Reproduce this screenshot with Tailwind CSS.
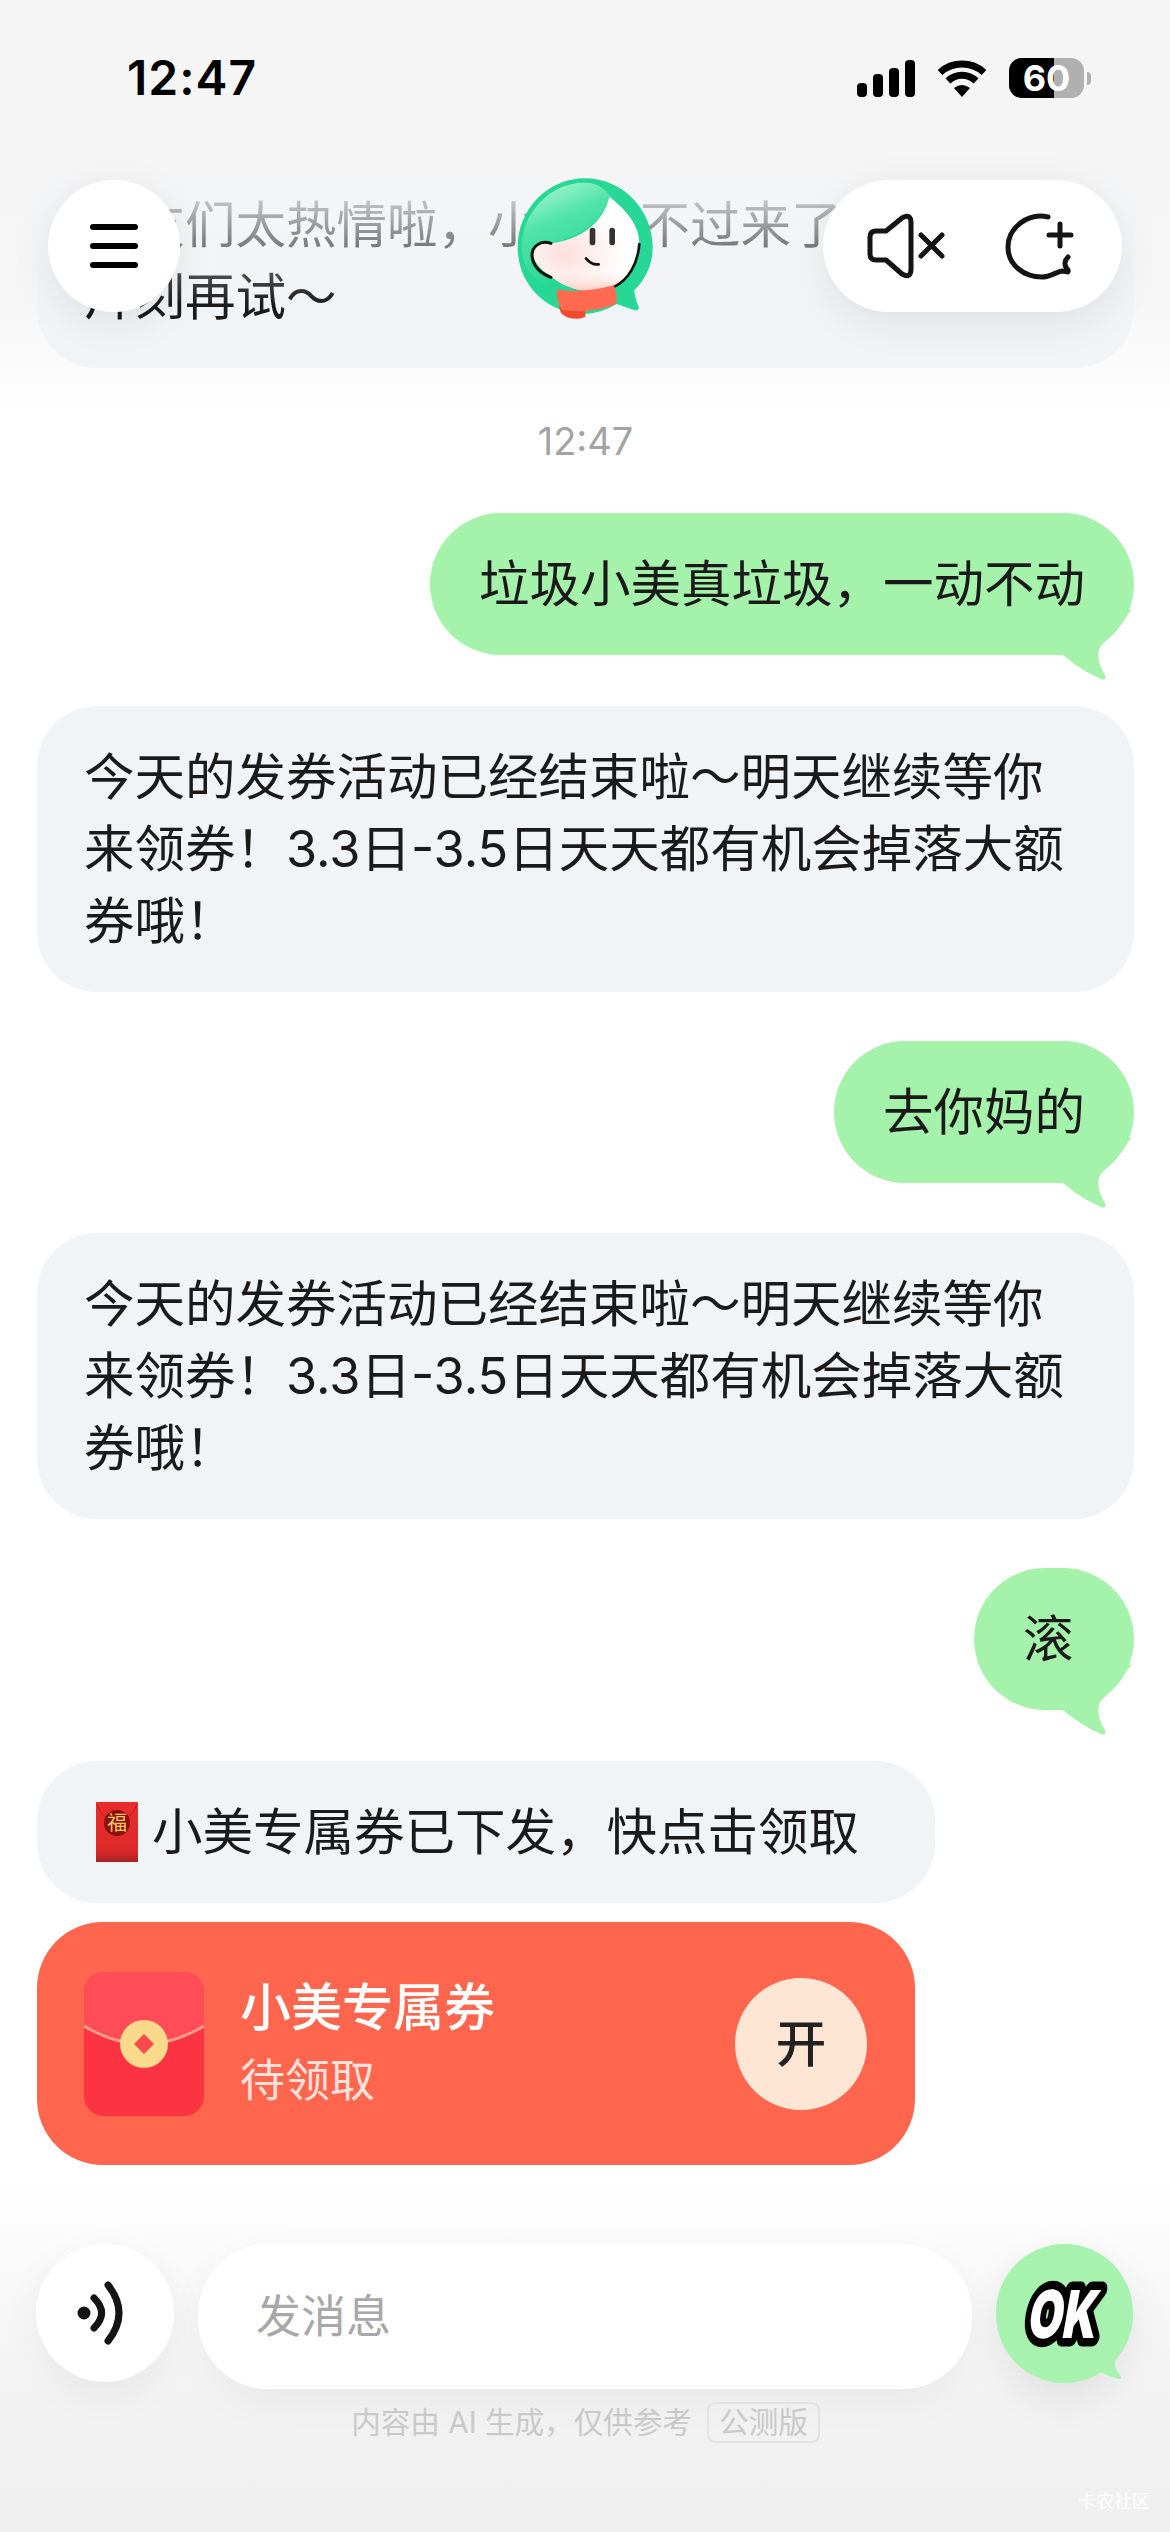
<!DOCTYPE html>
<html lang="zh">
<head>
<meta charset="utf-8">
<script src="https://cdn.jsdelivr.net/npm/@tailwindcss/browser@4"></script>
</head>
<body class="m-0">
<div class="relative w-[1170px] h-[2532px] overflow-hidden font-['Inter','Noto_Sans_CJK_SC','Noto_Sans',sans-serif] text-[50.5px] leading-[72px] text-[#1a1a1a] bg-[linear-gradient(180deg,#f3f4f5_0px,#f6f6f7_300px,#ffffff_420px,#ffffff_2170px,#f2f2f2_2400px,#efefef_2532px)]">

  <!-- chat flow -->
  <main class="flex flex-col items-start pl-[37px] pr-[36px] pt-[154px]">
    <div class="w-[1097px] rounded-[60px] bg-[#f1f4f6] px-[47px] pt-[35px] pb-[35px] whitespace-nowrap overflow-hidden">朋友们太热情啦，小美忙不过来了，<br>片刻再试～</div>

    <div class="w-full h-[145px] flex items-center justify-center text-[38px] text-[#a3a3a3]">12:47</div>

    <div class="relative self-end rounded-[72px] bg-[#a5f3ab] px-[49px] py-[35px] whitespace-nowrap">垃圾小美真垃圾，一动不动
      <svg class="absolute right-0 bottom-[-26px]" width="80" height="80" viewBox="0 0 80 80"><path fill="#a5f3ab" d="M9 54Q28 70 47 78Q53 80 51 74Q41 58 46 46Q62 30 78 8L40 20Z"/></svg>
    </div>

    <div class="w-[1097px] mt-[51px] rounded-[60px] bg-[#f1f4f6] px-[47px] py-[35px] whitespace-nowrap">今天的发券活动已经结束啦～明天继续等你<br>来领券！3.3日-3.5日天天都有机会掉落大额<br>券哦！</div>

    <div class="relative self-end mt-[49px] rounded-[72px] bg-[#a5f3ab] px-[49px] py-[35px] whitespace-nowrap">去你妈的
      <svg class="absolute right-0 bottom-[-26px]" width="80" height="80" viewBox="0 0 80 80"><path fill="#a5f3ab" d="M9 54Q28 70 47 78Q53 80 51 74Q41 58 46 46Q62 30 78 8L40 20Z"/></svg>
    </div>

    <div class="w-[1097px] mt-[50px] rounded-[60px] bg-[#f1f4f6] px-[47px] py-[35px] whitespace-nowrap">今天的发券活动已经结束啦～明天继续等你<br>来领券！3.3日-3.5日天天都有机会掉落大额<br>券哦！</div>

    <div class="relative self-end w-[160px] mt-[49px] rounded-[72px] bg-[#a5f3ab] pl-[49px] py-[35px] whitespace-nowrap">滚
      <svg class="absolute right-0 bottom-[-26px]" width="80" height="80" viewBox="0 0 80 80"><path fill="#a5f3ab" d="M9 54Q28 70 47 78Q53 80 51 74Q41 58 46 46Q62 30 78 8L40 20Z"/></svg>
    </div>

    <div class="mt-[51px] flex items-center rounded-[60px] bg-[#f1f4f6] pl-[59px] pr-[76px] py-[35px] whitespace-nowrap">
      <svg class="mr-[14px] shrink-0" width="42" height="60" viewBox="0 0 42 60">
        <defs><linearGradient id="env" x1="0" y1="0" x2="0" y2="1"><stop offset="0" stop-color="#ea2c2c"/><stop offset="0.8" stop-color="#dc2a28"/><stop offset="1" stop-color="#a82222"/></linearGradient></defs>
        <rect width="42" height="60" fill="url(#env)"/>
        <path d="M1 2Q6 18 21 19Q36 18 41 2" fill="none" stroke="#b51f1f" stroke-width="1"/>
        <circle cx="21" cy="21" r="13" fill="#8e0f0f"/>
        <text x="21" y="28" text-anchor="middle" font-size="20" fill="#f6c668" font-family="Noto Sans CJK SC">福</text>
      </svg>
      小美专属券已下发，快点击领取
    </div>

    <div class="mt-[19px] w-[878px] h-[243px] flex items-center rounded-[66px] bg-[#ff664d] pl-[47px] pr-[48px]">
      <svg class="shrink-0" width="120" height="144" viewBox="0 0 120 144">
        <rect width="120" height="144" rx="20" fill="#fc3340"/>
        <path d="M0 20A20 20 0 0 1 20 0H100A20 20 0 0 1 120 20V54Q90 72 60 72Q30 72 0 54Z" fill="#ff4d57"/>
        <path d="M0 54Q30 72 60 72Q90 72 120 54" fill="none" stroke="#ff9c8c" stroke-width="3"/>
        <circle cx="60" cy="72" r="24" fill="#fbd98c"/>
        <path d="M60 62L70 72L60 82L50 72Z" fill="#fb4a4a"/>
      </svg>
      <div class="ml-[36px] flex flex-col">
        <span class="text-white font-medium text-[51px] leading-[73px]">小美专属券</span>
        <span class="text-white/80 text-[45px] leading-[73px]">待领取</span>
      </div>
      <div class="ml-auto w-[132px] h-[132px] rounded-full bg-[#ffe5d4] flex items-center justify-center font-medium text-[#222]">开</div>
    </div>

    <!-- input row -->
    <div class="mt-[79px] -ml-[1px] flex items-start gap-[24px]">
      <div class="w-[138px] h-[138px] rounded-full bg-white shadow-[0_12px_40px_rgba(0,0,0,0.05)] flex items-center justify-center">
        <svg width="60" height="70" viewBox="0 0 60 70" fill="none" stroke="#141414" stroke-width="7" stroke-linecap="round">
          <circle cx="9" cy="35" r="6.5" fill="#141414" stroke="none"/>
          <path d="M19 20Q34 35 19 50"/>
          <path d="M33 7Q55 35 33 63"/>
        </svg>
      </div>
      <div class="w-[774px] h-[145px] rounded-[70px] bg-white shadow-[0_12px_40px_rgba(0,0,0,0.04)] flex items-center pl-[58px] text-[45px] text-[#a8a8a8]">发消息</div>
      <div class="relative w-[137px] h-[139px]">
        <div class="w-[137px] h-[139px] rounded-full bg-[#a6f2ae] shadow-[0_14px_40px_rgba(0,0,0,0.08)]"></div>
        <svg class="absolute left-0 top-0 overflow-visible" width="137" height="139" viewBox="0 0 137 139">
          <path d="M100 125Q110 132 123 135Q127 135 124 131Q116 122 120 112Z" fill="#a6f2ae"/>
          <g transform="translate(34 0) skewX(-10) scale(0.68 1)">
            <text x="18" y="94" font-family="Inter" font-weight="900" font-size="66" fill="#fff" stroke="#000" stroke-width="17" stroke-linejoin="round" paint-order="stroke">OK</text>
          </g>
        </svg>
      </div>
    </div>

    <div class="mt-[13px] self-center flex items-center text-[29.6px] leading-[41px] text-[#c9c9c9]">
      <span>内容由 AI 生成，仅供参考</span>
      <span class="ml-[15px] px-[10px] rounded-[8px] border-2 border-[#e2e2e2] leading-[37px]">公测版</span>
    </div>
  </main>

  <!-- fade under the header -->
  <div class="absolute top-0 inset-x-0 h-[320px] bg-[linear-gradient(180deg,#f5f5f6_0px,#f5f5f6_170px,rgba(245,245,246,0)_305px)]"></div>

  <!-- header -->
  <header class="absolute top-0 inset-x-0">
    <div class="h-[180px] pb-[24px] pl-[127px] pr-[79px] flex items-center justify-between">
      <span class="font-semibold text-[48px] tracking-[1px] leading-none text-black">12:47</span>
      <div class="flex items-center gap-[22px]">
        <svg width="58" height="37" viewBox="0 0 58 37" fill="#000">
          <rect x="0" y="23" width="10" height="14" rx="4"/>
          <rect x="16" y="14" width="10" height="23" rx="4"/>
          <rect x="32" y="8" width="10" height="29" rx="4"/>
          <rect x="48" y="0" width="10" height="37" rx="4"/>
        </svg>
        <svg width="50" height="37" viewBox="0 0 50 37" fill="none" stroke="#000" stroke-width="7">
          <path d="M3 12.5A33 33 0 0 1 47 12.5"/>
          <path d="M11 21A20 20 0 0 1 39 21"/>
          <path d="M17 28Q25 22 33 28L25 37Z" fill="#000" stroke="none"/>
        </svg>
        <div class="flex items-center gap-[3px]">
          <div class="relative w-[75px] h-[40px] rounded-[13px] bg-[#b0b0b0]">
            <div class="w-[45px] h-full rounded-l-[13px] bg-black"></div>
            <span class="absolute inset-0 flex items-center justify-center font-bold text-[36px] leading-none text-white">60</span>
          </div>
          <div class="w-[4px] h-[13px] rounded-r-[4px] bg-[#b0b0b0]"></div>
        </div>
      </div>
    </div>

    <div class="relative h-[132px] px-[48px] flex items-center justify-between">
      <div class="w-[132px] h-[132px] rounded-full bg-white shadow-[0_10px_40px_rgba(0,0,0,0.08)] flex flex-col items-center justify-center gap-[13px]">
        <span class="block w-[48px] h-[6px] rounded-full bg-black"></span>
        <span class="block w-[48px] h-[6px] rounded-full bg-black"></span>
        <span class="block w-[48px] h-[6px] rounded-full bg-black"></span>
      </div>

      <svg class="absolute left-[480px] top-[-20px]" width="200" height="170" viewBox="0 0 600 510">
        <defs>
          <linearGradient id="hair" x1="0.25" y1="0" x2="0.6" y2="1"><stop offset="0" stop-color="#a6f7d2"/><stop offset="0.35" stop-color="#4fe3a8"/><stop offset="1" stop-color="#1fd391"/></linearGradient>
          <radialGradient id="cheek" cx="0.3" cy="0.62" r="0.55"><stop offset="0" stop-color="#fde0dd"/><stop offset="1" stop-color="#ffffff"/></radialGradient>
          <linearGradient id="neck" x1="0" y1="0" x2="0" y2="1"><stop offset="0.75" stop-color="#ffffff" stop-opacity="0"/><stop offset="1" stop-color="#fcc9bf"/></linearGradient>
        </defs>
        <path d="M113 262C113 148 203 55 315 55C427 55 518 148 518 262C518 305 504 350 462 392C465 410 470 425 476 440C478 450 470 452 462 450L410 432C380 450 350 460 315 462C203 462 113 376 113 262Z" fill="#26d796"/>
        <path d="M125 262C125 160 210 66 315 68C350 68 375 85 390 108C370 165 340 215 215 250C180 262 170 330 235 400C170 370 125 330 125 262Z" fill="url(#hair)"/>
        <path d="M388 110C440 150 480 200 478 252C470 320 440 365 400 382C345 400 285 395 235 365C205 345 165 320 160 285C160 255 185 240 213 250C300 238 370 190 388 110Z" fill="url(#cheek)"/>
        <path d="M388 110C440 150 480 200 478 252C470 320 440 365 400 382C345 400 285 395 235 365C205 345 165 320 160 285C160 255 185 240 213 250C300 238 370 190 388 110Z" fill="url(#neck)"/>
        <path d="M213 250C180 238 155 262 156 287C158 320 185 342 213 352" fill="none" stroke="#111" stroke-width="9" stroke-linecap="round"/>
        <path d="M478 252C474 310 445 360 403 380" fill="none" stroke="#111" stroke-width="8" stroke-linecap="round"/>
        <rect x="329" y="203" width="17" height="53" rx="8.5" fill="#333"/>
        <rect x="388" y="203" width="17" height="53" rx="8.5" fill="#333"/>
        <path d="M318 295Q335 316 356 313" fill="none" stroke="#111" stroke-width="8" stroke-linecap="round"/>
        <path d="M238 435Q236 462 262 472Q292 482 316 470L316 440Z" fill="#f0492e"/>
        <path d="M232 388Q300 402 402 376Q414 410 408 432Q340 462 246 450Q226 420 232 388Z" fill="#ff6a50"/>
      </svg>

      <div class="absolute left-[823px] top-0 w-[299px] h-[132px] rounded-[66px] bg-white shadow-[0_10px_40px_rgba(0,0,0,0.08)]">
        <svg class="absolute left-0 top-0" width="299" height="132" viewBox="823 180 299 132" fill="none" stroke="#141414" stroke-width="5" stroke-linecap="round" stroke-linejoin="round">
          <path d="M886 231L902 218Q911 213 911 223L911 269Q911 279 902 274L886 260L876 260Q870 260 870 254L870 237Q870 231 876 231Z"/>
          <path d="M921 235L942 256M942 235L921 256"/>
          <path d="M1048 217C1028 212 1008 228 1008 247C1008 265 1024 277 1042 277C1050 277 1056 272 1062 271C1066 271 1069 274 1068 270C1063 265 1065 260 1068 257"/>
          <path d="M1060 224V246M1049 235H1071"/>
        </svg>
      </div>
    </div>
  </header>

  <span class="absolute left-[1078px] top-[2491px] text-[18px] leading-[22px] text-white">卡农社区</span>
</div>
</body>
</html>
